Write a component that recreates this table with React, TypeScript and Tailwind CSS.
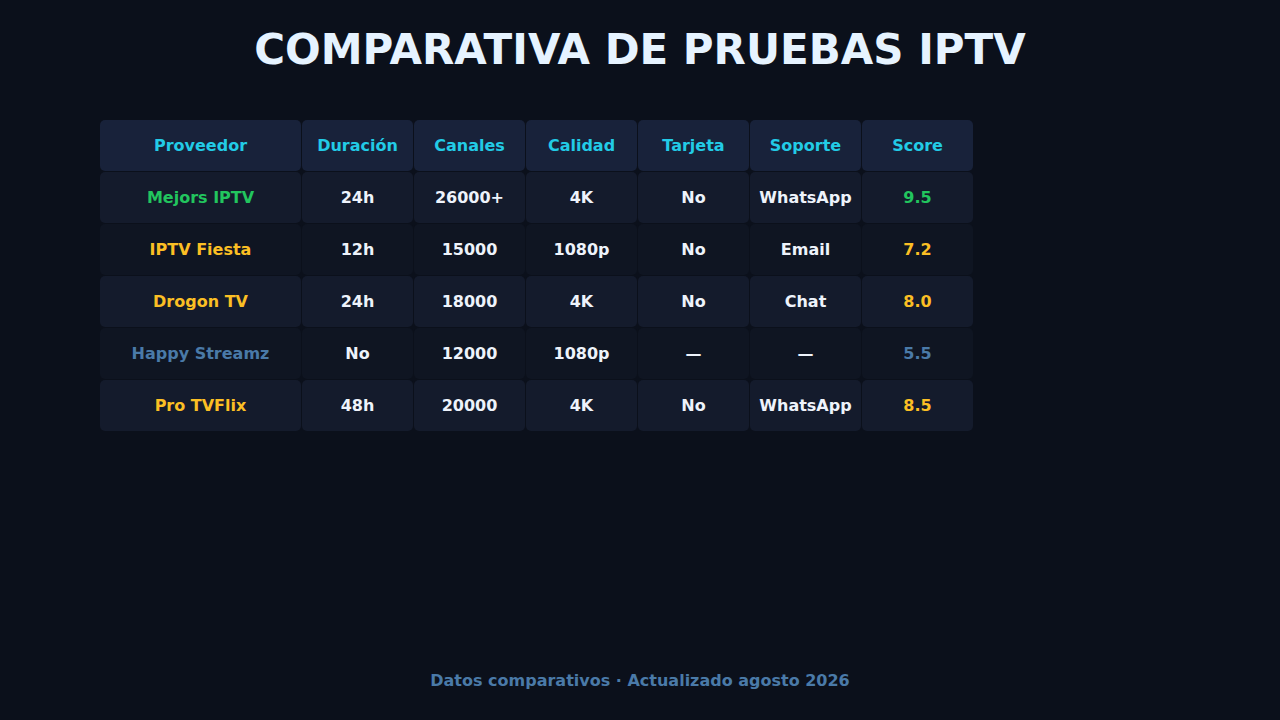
import React from "react";

const headers = ["Proveedor", "Duración", "Canales", "Calidad", "Tarjeta", "Soporte", "Score"];

type Row = { name: string; color: string; cells: string[] };

const rows: Row[] = [
  { name: "Mejors IPTV", color: "text-[#22c55e]", cells: ["24h", "26000+", "4K", "No", "WhatsApp", "9.5"] },
  { name: "IPTV Fiesta", color: "text-[#fbbf24]", cells: ["12h", "15000", "1080p", "No", "Email", "7.2"] },
  { name: "Drogon TV", color: "text-[#fbbf24]", cells: ["24h", "18000", "4K", "No", "Chat", "8.0"] },
  { name: "Happy Streamz", color: "text-[#4a7aa8]", cells: ["No", "12000", "1080p", "—", "—", "5.5"] },
  { name: "Pro TVFlix", color: "text-[#fbbf24]", cells: ["48h", "20000", "4K", "No", "WhatsApp", "8.5"] },
];

export default function App() {
  return (
    <div
      className="w-[1280px] h-[720px] bg-[#0b101b] flex flex-col items-center"
      style={{ fontFamily: '"DejaVu Sans", sans-serif' }}
    >
      <h1 className="mt-[24px] h-[52px] text-[42px] leading-[52px] font-bold text-[#e6f3ff]">
        COMPARATIVA DE PRUEBAS IPTV
      </h1>
      <div className="w-full pl-[99px] mt-[43px]">
        <table className="border-separate border-spacing-[1px]">
          <thead>
            <tr>
              {headers.map((h, i) => (
                <th
                  key={h}
                  className={`${i === 0 ? "w-[201px]" : "w-[111px]"} h-[51px] p-0 rounded-[5px] bg-[#18223a] text-[#22cbe6] text-[16px] font-bold text-center align-middle`}
                >
                  {h}
                </th>
              ))}
            </tr>
          </thead>
          <tbody>
            {rows.map((r, ri) => {
              const bg = ri % 2 === 0 ? "bg-[#141b2c]" : "bg-[#0f1522]";
              return (
                <tr key={r.name}>
                  <td className={`h-[51px] p-0 rounded-[5px] ${bg} ${r.color} text-[16px] font-bold text-center align-middle`}>
                    {r.name}
                  </td>
                  {r.cells.map((c, ci) => (
                    <td
                      key={ci}
                      className={`h-[51px] p-0 rounded-[5px] ${bg} ${ci === 5 ? r.color : "text-[#eef3fb]"} text-[16px] font-bold text-center align-middle`}
                    >
                      {c}
                    </td>
                  ))}
                </tr>
              );
            })}
          </tbody>
        </table>
      </div>
      <div className="flex-1" />
      <p className="mb-[27px] text-[16px] font-bold text-[#4a7aa8]">
        Datos comparativos · Actualizado agosto 2026
      </p>
    </div>
  );
}
